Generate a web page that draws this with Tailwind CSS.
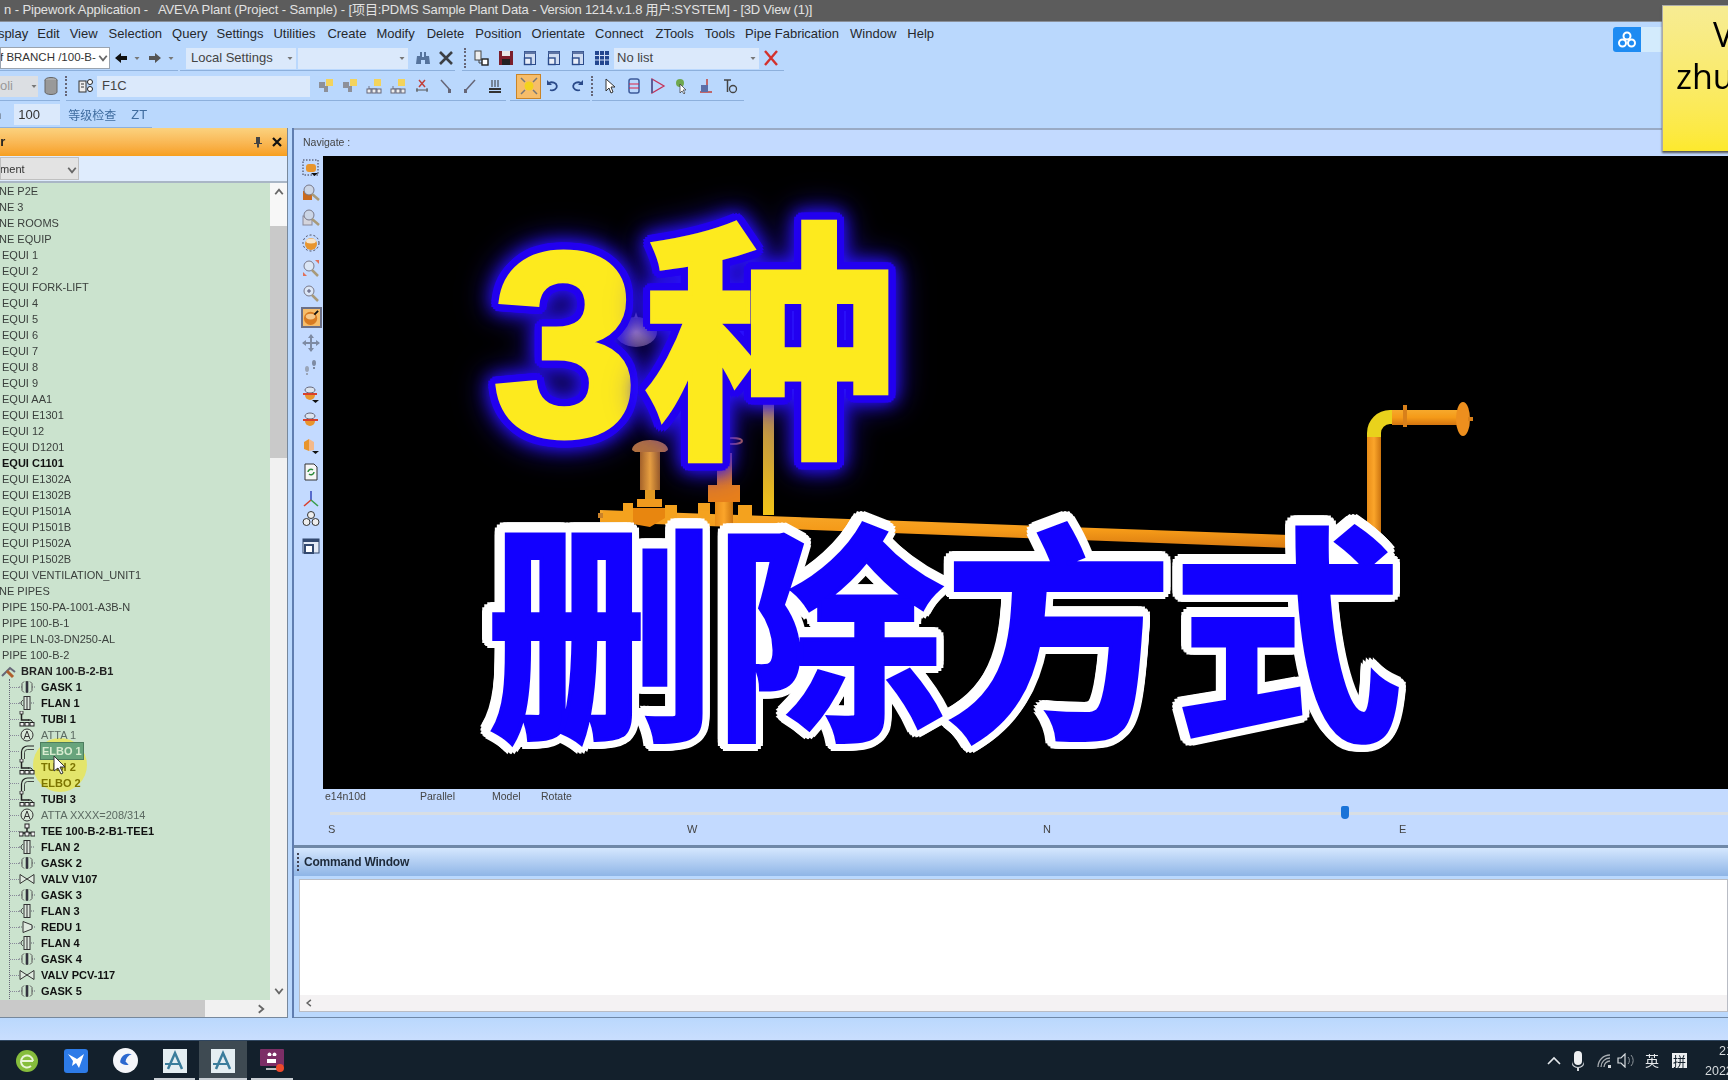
<!DOCTYPE html>
<html lang="zh">
<head>
<meta charset="UTF-8" />
<title>AVEVA Plant - 3D View</title>
<script src="https://cdn.jsdelivr.net/npm/@tailwindcss/browser@4"></script>
</head>
<body class="bg-[#bad8fd] overflow-hidden">
<!-- shared icon shapes -->
<svg class="hidden">
  <symbol id="i-gask" viewBox="0 0 16 16"><path d="M0 8h3M13 8h3" stroke="#667" fill="none" stroke-dasharray="1 1"/><path d="M5 2.500 3 4.500v7l2 2M11 2.500l2 2v7l-2 2" stroke="#555" fill="none"/><rect x="7" y="2.500" width="2" height="11" fill="#334" stroke="#333" stroke-width=".6"/></symbol>
  <symbol id="i-flan" viewBox="0 0 16 16"><path d="M0 8h4M12 8h4" stroke="#667" fill="none" stroke-dasharray="1 1"/><path d="M4 5 2 7v2l2 2" stroke="#555" fill="none"/><rect x="5" y="1.500" width="6" height="13" fill="#dfe8df" stroke="#333"/><path d="M8 1.500v13" stroke="#333"/></symbol>
  <symbol id="i-tubi" viewBox="0 0 16 16"><path d="M2.500 1v8h8" stroke="#222" fill="none" stroke-width="1.500"/><rect x="1" y="0" width="3" height="3" fill="#eee" stroke="#222" stroke-width=".8"/><rect x="1" y="11.500" width="4" height="3.500" fill="#eee" stroke="#222"/><rect x="6" y="11.500" width="4" height="3.500" fill="#eee" stroke="#222"/><rect x="11" y="11.500" width="4" height="3.500" fill="#eee" stroke="#222"/><path d="M9 9h3l2 2.500" stroke="#222" fill="none"/></symbol>
  <symbol id="i-atta" viewBox="0 0 16 16"><circle cx="8" cy="8" r="6" fill="#d8e8d8" stroke="#333"/><path d="M5 12 8 4l3 8M6 9.500h4" stroke="#333" fill="none"/></symbol>
  <symbol id="i-elbo" viewBox="0 0 16 16"><path d="M2.500 16V9a6 6 0 0 1 6-6H15" fill="none" stroke="#222" stroke-width="1.200"/><path d="M5.500 16V9.500a3 3 0 0 1 3-3H15" fill="none" stroke="#222" stroke-width=".8"/></symbol>
  <symbol id="i-tee" viewBox="0 0 16 16"><path d="M1 10h14M8 3v7" stroke="#222" stroke-width="1.500"/><rect x="6" y="1" width="4" height="4" fill="#eee" stroke="#222"/><rect x="0" y="9" width="4" height="4" fill="#eee" stroke="#222"/><rect x="6" y="9" width="4" height="4" fill="#eee" stroke="#222"/><rect x="12" y="9" width="4" height="4" fill="#eee" stroke="#222"/></symbol>
  <symbol id="i-valv" viewBox="0 0 16 16"><path d="M1 3.500v9l14-9v9z" fill="#dfeadf" stroke="#333"/></symbol>
  <symbol id="i-redu" viewBox="0 0 16 16"><path d="M0 8h3M13 8h3" stroke="#667" stroke-dasharray="1 1"/><path d="M4 2.500v11l9-3.500V6z" fill="#dfeadf" stroke="#333"/></symbol>
  <symbol id="i-chev" viewBox="0 0 8 8"><path d="M1.500 2.500 4 5.500l2.500-3" fill="none" stroke="#666" stroke-width="1.200"/></symbol>
  <symbol id="i-caret" viewBox="0 0 8 8"><path d="M1.500 3h5L4 6z" fill="#777"/></symbol>
  <symbol id="i-win" viewBox="0 0 16 16"><rect x="2.500" y="1.500" width="11" height="13" fill="#cfdcf2" stroke="#2a4a8a"/><rect x="2.500" y="1.500" width="11" height="2.500" fill="#5d74a4"/><rect x="2.500" y="8" width="6.500" height="6.500" fill="#e9eef8" stroke="#2a4a8a" stroke-width="1.400"/></symbol>
  <symbol id="i-app" viewBox="0 0 24 24"><rect width="24" height="24" fill="#e4eef2"/><path d="M5 20 12 4l7 16" fill="none" stroke="#3b7d9c" stroke-width="2.500"/><path d="M2 15h16" stroke="#3b7d9c" stroke-width="2"/></symbol>
  <symbol id="i-pick" viewBox="0 0 16 16"><path d="M1 4h6v4h3v6H6v-4H1z" fill="#8d9099"/><rect x="8" y="1" width="7" height="7" fill="#f3d35c"/></symbol>
  <symbol id="i-pick2" viewBox="0 0 16 16"><rect x="8" y="1" width="7" height="7" fill="#f3d35c"/><path d="M3 8v3h8" stroke="#778" fill="none"/><rect x="1" y="11" width="4" height="4" fill="#eee" stroke="#667"/><rect x="6" y="11" width="4" height="4" fill="#eee" stroke="#667"/><rect x="11" y="11" width="4" height="4" fill="#eee" stroke="#667"/></symbol>
</svg>

<div class="relative w-[1728px] h-[1080px] overflow-hidden flex flex-col font-['Liberation_Sans',sans-serif]">

  <div class="blur-[0.5px] flex flex-col shrink-0">
    <!-- title bar -->
    <div class="h-[22px] bg-[#5c5c5c] text-[#e2e2e2] text-[13px] leading-[20px] whitespace-nowrap overflow-hidden tracking-[-0.1px] pl-[4px] font-['Liberation_Sans','Noto_Sans_CJK_SC',sans-serif] border-b border-[#8a8f98]">n - Pipework Application -&nbsp;&nbsp; AVEVA Plant (Project - Sample) - [项目:PDMS Sample Plant Data - <span class="tracking-[-0.25px]">Version 1214.v.1.8 用户:SYSTEM] - [3D View (1)]</span></div>

    <!-- menu bar -->
    <div class="h-[23px] bg-[#bad8fd] flex items-center text-[13px] text-[#26282c] whitespace-nowrap -ml-[5px]">
      <span class="ml-0">isplay</span><span class="ml-[9px]">Edit</span><span class="ml-[10px]">View</span><span class="ml-[11px]">Selection</span><span class="ml-[10px]">Query</span><span class="ml-[9px]">Settings</span><span class="ml-[10px]">Utilities</span><span class="ml-[12px]">Create</span><span class="ml-[10px]">Modify</span><span class="ml-[12px]">Delete</span><span class="ml-[11px]">Position</span><span class="ml-[10px]">Orientate</span><span class="ml-[10px]">Connect</span><span class="ml-[12px]">ZTools</span><span class="ml-[11px]">Tools</span><span class="ml-[10px]">Pipe Fabrication</span><span class="ml-[11px]">Window</span><span class="ml-[11px]">Help</span>
    </div>

    <!-- toolbar 1 -->
    <div class="h-[26px] bg-[#bad8fd] flex items-center text-[12px] text-[#333] whitespace-nowrap relative">
      <div class="w-[110px] h-[22px] bg-white border border-[#9aa4b0] flex items-center justify-between overflow-hidden shrink-0"><span class="-ml-[1px] text-[11.500px]">f BRANCH /100-B-</span><svg class="w-3 h-3 shrink-0"><use href="#i-chev"/></svg></div>
      <svg class="w-4 h-4 ml-[3px]" viewBox="0 0 16 16"><path d="M2 8l6-5v3h6v4H8v3z" fill="#111"/></svg>
      <svg class="w-2 h-2 ml-[4px]"><use href="#i-caret"/></svg>
      <svg class="w-4 h-4 ml-[6px]" viewBox="0 0 16 16"><path d="M14 8 8 3v3H2v4h6v3z" fill="#555"/></svg>
      <svg class="w-2 h-2 ml-[4px]"><use href="#i-caret"/></svg>
      <div class="w-[110px] h-[21px] ml-[11px] bg-[#dbe9fb] flex items-center justify-between pl-[5px] pr-[2px] text-[13px] text-[#444] shrink-0">Local Settings<svg class="w-2 h-2"><use href="#i-caret"/></svg></div>
      <div class="w-[110px] h-[21px] ml-[2px] bg-[#dbe9fb] flex items-center justify-end pr-[2px] shrink-0"><svg class="w-2 h-2"><use href="#i-caret"/></svg></div>
      <svg class="w-4 h-4 ml-[7px]" viewBox="0 0 16 16"><path d="M2 6h4v8H1zM10 6h4l1 8h-5zM5 2h2v5H5zM9 2h2v5H9zM6 7h4v3H6z" fill="#55739c"/></svg>
      <svg class="w-4 h-4 ml-[7px]" viewBox="0 0 16 16"><path d="m2 2 12 12M14 2 2 14" stroke="#3c3f44" stroke-width="2.600"/></svg>
      <div class="w-[2px] h-5 ml-[10px] border-l-2 border-dotted border-[#667]"></div>
      <svg class="w-4 h-4 ml-[7px]" viewBox="0 0 16 16"><rect x="2" y="1" width="6" height="9" fill="#eee" stroke="#444"/><path d="M6 10v3h3" stroke="#444" fill="none"/><rect x="9" y="9" width="6" height="6" fill="#fff" stroke="#222" stroke-width="1.400"/></svg>
      <svg class="w-4 h-4 ml-[9px]" viewBox="0 0 16 16"><rect x="1" y="1" width="14" height="14" fill="#7c1f2c"/><rect x="4" y="1" width="8" height="5" fill="#e8e8e8"/><rect x="4" y="9" width="8" height="6" fill="#222"/></svg>
      <svg class="w-4 h-4 ml-[8px]"><use href="#i-win"/></svg>
      <svg class="w-4 h-4 ml-[8px]"><use href="#i-win"/></svg>
      <svg class="w-4 h-4 ml-[8px]"><use href="#i-win"/></svg>
      <svg class="w-4 h-4 ml-[8px]" viewBox="0 0 16 16"><rect x="1" y="1" width="14" height="14" fill="#23468f"/><path d="M1 5.500h14M1 10h14M5.500 1v14M10.500 1v14" stroke="#cfdcf5"/></svg>
      <div class="w-[145px] h-[21px] ml-[4px] bg-[#dbe9fb] flex items-center justify-between pl-[3px] pr-[2px] text-[13px] text-[#444] shrink-0">No list<svg class="w-2 h-2"><use href="#i-caret"/></svg></div>
      <svg class="w-4 h-4 ml-[4px]" viewBox="0 0 16 16"><path d="m2 1 12 14M14 1 2 15" stroke="#d3312c" stroke-width="2.400"/></svg>
      <div class="absolute left-0 bottom-0 w-[178px] h-px bg-[#8db0dc]"></div>
      <div class="absolute left-[180px] bottom-0 w-[275px] h-px bg-[#8db0dc]"></div>
      <div class="absolute left-[462px] bottom-0 w-[322px] h-px bg-[#8db0dc]"></div>
    </div>

    <!-- toolbar 2 -->
    <div class="h-[30px] bg-[#bad8fd] flex items-center text-[13px] text-[#333] whitespace-nowrap relative">
      <div class="w-[38px] h-[21px] bg-[#dcdfe3] flex items-center justify-between text-[#999] shrink-0"><span>oli</span><svg class="w-2 h-2"><use href="#i-caret"/></svg></div>
      <svg class="w-4 h-5 ml-[5px]" viewBox="0 0 16 20"><ellipse cx="8" cy="4" rx="6" ry="2.500" fill="#aaa" stroke="#666"/><path d="M2 4v12a6 2.500 0 0 0 12 0V4" fill="#999" stroke="#666"/></svg>
      <div class="w-[2px] h-5 ml-[6px] border-l-2 border-dotted border-[#667]"></div>
      <svg class="w-4 h-4 ml-[11px]" viewBox="0 0 16 16"><rect x="1" y="3" width="7" height="11" fill="#eee" stroke="#333"/><path d="M3 6h3M3 9h3" stroke="#333"/><circle cx="12" cy="4" r="2.500" fill="#fff" stroke="#222"/><circle cx="12" cy="11" r="2.500" fill="#fff" stroke="#222"/></svg>
      <div class="w-[213px] h-[21px] ml-[3px] bg-[#dbe9fb] flex items-center pl-[5px] text-[#444] shrink-0">F1C</div>
      <svg class="w-4 h-4 ml-[8px]"><use href="#i-pick"/></svg>
      <svg class="w-4 h-4 ml-[8px]"><use href="#i-pick"/></svg>
      <svg class="w-4 h-4 ml-[8px]"><use href="#i-pick2"/></svg>
      <svg class="w-4 h-4 ml-[8px]"><use href="#i-pick2"/></svg>
      <svg class="w-4 h-4 ml-[8px]" viewBox="0 0 16 16"><path d="m5 2 6 7M11 2 5 9" stroke="#c2403a" stroke-width="1.500"/><path d="M2 12h12M3 10v4M13 10v4" stroke="#555"/></svg>
      <svg class="w-4 h-4 ml-[8px]" viewBox="0 0 16 16"><path d="m3 2 9 10" stroke="#667" stroke-width="1.500"/><rect x="10" y="11" width="3" height="4" fill="#667"/></svg>
      <svg class="w-4 h-4 ml-[8px]" viewBox="0 0 16 16"><path d="M13 2 4 12" stroke="#667" stroke-width="1.500"/><rect x="2" y="11" width="3" height="4" fill="#667"/></svg>
      <svg class="w-4 h-4 ml-[9px]" viewBox="0 0 16 16"><path d="M2 11h12M2 14h12" stroke="#333" stroke-width="2"/><path d="M5 2v7M8 2v7M11 2v7" stroke="#333"/></svg>
      <div class="w-[25px] h-[25px] ml-[13px] bg-[#f6bd6a] border border-[#c98428] flex items-center justify-center shrink-0"><svg class="w-5 h-5" viewBox="0 0 20 20"><circle cx="10" cy="10" r="4.500" fill="#f3d21e"/><path d="m2 2 4 4M18 2l-4 4M2 18l4-4M18 18l-4-4" stroke="#777" stroke-width="1.500"/></svg></div>
      <svg class="w-4 h-4 ml-[4px]" viewBox="0 0 16 16"><path d="M4 5a5 4 0 1 1 1 7" fill="none" stroke="#2a4a8a" stroke-width="1.800"/><path d="M2 2v5h5z" fill="#2a4a8a"/></svg>
      <svg class="w-4 h-4 ml-[8px]" viewBox="0 0 16 16"><path d="M12 5a5 4 0 1 0-1 7" fill="none" stroke="#2a4a8a" stroke-width="1.800"/><path d="M14 2v5H9z" fill="#2a4a8a"/></svg>
      <div class="w-[2px] h-5 ml-[6px] border-l-2 border-dotted border-[#667]"></div>
      <svg class="w-4 h-4 ml-[9px]" viewBox="0 0 16 16"><path d="M4 1v12l3-3 2 5 2-1-2-5h4z" fill="#fff" stroke="#333"/></svg>
      <svg class="w-4 h-4 ml-[8px]" viewBox="0 0 16 16"><rect x="3" y="1" width="10" height="14" rx="2" fill="none" stroke="#3c5a9a" stroke-width="1.500"/><path d="M3 6h10M3 10h10" stroke="#d24"/></svg>
      <svg class="w-4 h-4 ml-[8px]" viewBox="0 0 16 16"><path d="M2 1v14l12-7z" fill="none" stroke="#c6355b" stroke-width="1.300"/><path d="M2 1v14" stroke="#3c5a9a" stroke-width="1.500"/></svg>
      <svg class="w-4 h-4 ml-[8px]" viewBox="0 0 16 16"><circle cx="6" cy="5" r="4" fill="#6fa84f"/><path d="M6 6v9l2-2 2 3 1-1-2-3h3z" fill="#fff" stroke="#333" stroke-width=".7"/></svg>
      <svg class="w-4 h-4 ml-[8px]" viewBox="0 0 16 16"><path d="M9 1v13M2 14h12" stroke="#c2403a" stroke-width="1.500"/><rect x="3" y="7" width="7" height="7" fill="#5b6fa8"/></svg>
      <svg class="w-4 h-4 ml-[8px]" viewBox="0 0 16 16"><path d="M2 2h7M5.500 2v12" stroke="#444" stroke-width="1.500"/><circle cx="11" cy="11" r="3.500" fill="none" stroke="#444" stroke-width="1.300"/></svg>
      <div class="absolute left-0 bottom-0 w-[60px] h-px bg-[#8db0dc]"></div>
      <div class="absolute left-[66px] bottom-0 w-[440px] h-px bg-[#8db0dc]"></div>
      <div class="absolute left-[510px] bottom-0 w-[80px] h-px bg-[#8db0dc]"></div>
      <div class="absolute left-[592px] bottom-0 w-[152px] h-px bg-[#8db0dc]"></div>
    </div>

    <!-- toolbar 3 -->
    <div class="h-[27px] bg-[#bad8fd] flex items-center text-[13px] text-[#333] whitespace-nowrap relative">
      <span class="-ml-[6px]">n</span>
      <div class="w-[46px] h-[21px] ml-[13px] bg-[#dbe9fb] flex items-center pl-[4px] shrink-0">100</div>
      <span class="ml-[8px] text-[#3f6c9f] text-[12px] font-['Noto_Sans_CJK_SC',sans-serif]">等级检查</span>
      <span class="ml-[15px] text-[#3f6c9f]">ZT</span>
      <div class="absolute left-0 bottom-0 w-[152px] h-px bg-[#8db0dc]"></div>
    </div>
  </div>

  <!-- main area -->
  <div class="h-[890px] flex shrink-0">
    <!-- explorer panel -->
    <div class="w-[288px] shrink-0 flex flex-col border-r border-[#77889c] blur-[0.5px]">
      <div class="h-[28px] bg-gradient-to-b from-[#fbd27e] to-[#f79f1c] flex items-center justify-between text-[13px] font-bold text-[#222] shrink-0">
        <span class="-ml-[7px]">er</span>
        <div class="flex items-center gap-[8px] pr-[4px]">
          <svg class="w-[10px] h-3" viewBox="0 0 10 12"><path d="M3 1h4v6h2v1H6v3.500H4V8H1V7h2z" fill="#444"/></svg>
          <svg class="w-3 h-3" viewBox="0 0 12 12"><path d="m2 2 8 8M10 2l-8 8" stroke="#111" stroke-width="2.200"/></svg>
        </div>
      </div>
      <div class="h-[27px] bg-[#dfecfd] flex items-center border-b-2 border-[#a9b6c6] shrink-0">
        <div class="w-[79px] h-[23px] bg-[#e3e3e3] border border-[#c0c0c0] flex items-center justify-between text-[11px] text-[#333] overflow-hidden pt-[2px]"><span class="-ml-[7px]">ement</span><svg class="w-3 h-3"><use href="#i-chev"/></svg></div>
      </div>
      <div class="flex-1 flex min-h-0">
        <div id="tree" class="relative w-[270px] h-[817px] bg-[#cbe3ce] overflow-hidden text-[11px] leading-4 text-[#3a3f3c] whitespace-nowrap shrink-0"></div>
        <!-- vertical scrollbar -->
        <div class="w-[17px] h-[817px] bg-[#f1f1f1] flex flex-col items-center shrink-0">
          <div class="h-[43px] w-full flex justify-center pt-[3px] bg-[#f7f7f7]"><svg class="w-3 h-3 rotate-180"><use href="#i-chev"/></svg></div>
          <div class="h-[232px] w-full bg-[#c9c9c9]"></div>
          <div class="flex-1"></div>
          <svg class="w-3 h-3 mb-[3px]"><use href="#i-chev"/></svg>
        </div>
      </div>
      <!-- horizontal scrollbar -->
      <div class="h-[18px] bg-[#f1f1f1] flex items-center shrink-0 border-b border-[#77889c]">
        <div class="w-[205px] h-full bg-[#c9c9c9]"></div>
        <svg class="w-3 h-3 ml-[50px] -rotate-90"><use href="#i-chev"/></svg>
      </div>
    </div>

    <!-- splitter -->
    <div class="w-[6px] bg-[#bad8fd] border-r-2 border-[#5f7db0] shrink-0"></div>

    <!-- right column -->
    <div class="flex-1 flex flex-col min-w-0">
      <div class="h-[717px] flex flex-col shrink-0 bg-[#c3daff] border-t-2 border-[#99aac4]">
        <div class="h-[26px] flex items-center pl-[9px] text-[10.500px] text-[#444] blur-[0.5px] shrink-0">Navigate :</div>
        <div class="h-[633px] flex shrink-0">
          <!-- view toolbar -->
          <div class="w-[29px] flex flex-col items-center pl-[5px] pt-[2px] blur-[0.5px] shrink-0">
            <svg class="w-[18px] h-[18px] mt-[1px]" viewBox="0 0 18 18"><rect x="1" y="1" width="15" height="15" fill="none" stroke="#334" stroke-dasharray="1.500 1.500"/><rect x="4" y="5" width="10" height="8" rx="3" fill="#e8952d"/><path d="M9 14h7l-3.500 3z" fill="#111"/></svg>
            <svg class="w-[18px] h-[18px] mt-[7px]" viewBox="0 0 18 18"><rect x="1" y="7" width="9" height="9" fill="#c96a1e"/><circle cx="7" cy="6" r="5" fill="#cbd5e6" stroke="#778"/><path d="m10 10 7 6" stroke="#a89a7a" stroke-width="2.500"/></svg>
            <svg class="w-[18px] h-[18px] mt-[7px]" viewBox="0 0 18 18"><rect x="1" y="7" width="9" height="9" fill="#d4d4dc" stroke="#889"/><circle cx="7" cy="6" r="5" fill="#cbd5e6" stroke="#778"/><path d="m10 10 7 6" stroke="#a89a7a" stroke-width="2.500"/></svg>
            <svg class="w-[18px] h-[18px] mt-[7px]" viewBox="0 0 18 18"><circle cx="9" cy="9" r="8" fill="none" stroke="#445" stroke-dasharray="2 2"/><circle cx="9" cy="10" r="6" fill="#e8952d"/><ellipse cx="9" cy="7" rx="5" ry="2.500" fill="#f6e4c8"/></svg>
            <svg class="w-[18px] h-[18px] mt-[7px]" viewBox="0 0 18 18"><circle cx="7" cy="7" r="5" fill="#dbe6f6" stroke="#778"/><path d="m10 11 6 6" stroke="#a89a7a" stroke-width="2.500"/><path d="M13 1h4v4zM1 13v4h4z" fill="#e0705a"/></svg>
            <svg class="w-[18px] h-[18px] mt-[7px]" viewBox="0 0 18 18"><circle cx="7" cy="7" r="5" fill="#dbe6f6" stroke="#778"/><path d="m10 11 6 6" stroke="#a89a7a" stroke-width="2.500"/><path d="M5 7h4M7 5v4" stroke="#557"/></svg>
            <div class="w-[21px] h-[21px] mt-[5px] bg-[#f6bd6a] border-2 border-[#6b6f86] flex items-center justify-center"><svg class="w-[17px] h-[17px]" viewBox="0 0 18 18"><circle cx="8" cy="10" r="7" fill="#d87b22"/><ellipse cx="8" cy="8" rx="5" ry="3" fill="#f4c78a"/><path d="m12 6 4-4" stroke="#111" stroke-width="2"/></svg></div>
            <svg class="w-[18px] h-[18px] mt-[6px]" viewBox="0 0 18 18"><path d="M9 1v16M1 9h16" stroke="#7e8ba3" stroke-width="2"/><path d="M9 0 6 4h6zM9 18l-3-4h6zM0 9l4-3v6zM18 9l-4-3v6z" fill="#7e8ba3"/></svg>
            <svg class="w-[18px] h-[18px] mt-[7px]" viewBox="0 0 18 18"><ellipse cx="12" cy="4" rx="2" ry="3" fill="#7e8ba3"/><rect x="11" y="8" width="2" height="2" fill="#7e8ba3"/><ellipse cx="5" cy="10" rx="2" ry="3" fill="#9aa5b8"/><rect x="4" y="14" width="2" height="2" fill="#9aa5b8"/></svg>
            <svg class="w-[18px] h-[18px] mt-[8px]" viewBox="0 0 18 18"><ellipse cx="8" cy="5" rx="5" ry="3" fill="#dce4ef" stroke="#667"/><path d="M1 9h14" stroke="#d8402c" stroke-width="2"/><path d="M3 10a5 5 0 0 0 10 0z" fill="#e8952d"/><path d="M10 15h7l-3.500 3z" fill="#111"/></svg>
            <svg class="w-[18px] h-[18px] mt-[8px]" viewBox="0 0 18 18"><ellipse cx="8" cy="5" rx="5" ry="3" fill="#dce4ef" stroke="#667"/><path d="M1 9h15" stroke="#d8402c" stroke-width="2"/><path d="M3 10a5 5 0 0 0 10 0z" fill="#e8952d"/></svg>
            <svg class="w-[18px] h-[18px] mt-[8px]" viewBox="0 0 18 18"><path d="M2 5l5-3v12l-5-2z" fill="#e8952d"/><path d="M7 2l5 3v8l-5 1z" fill="#f4b98a"/><path d="M10 14h7l-3.500 3z" fill="#111"/></svg>
            <svg class="w-[18px] h-[18px] mt-[8px]" viewBox="0 0 18 18"><path d="M3 1h9l3 3v13H3z" fill="#f6f6f6" stroke="#333"/><path d="M6 9a3 3 0 0 1 5-2M12 9a3 3 0 0 1-5 2" fill="none" stroke="#2e8b3c" stroke-width="1.500"/></svg>
            <svg class="w-[18px] h-[18px] mt-[9px]" viewBox="0 0 18 18"><path d="M9 10V1" stroke="#3b4fc0" stroke-width="1.600"/><path d="M9 10 2 16" stroke="#d8402c" stroke-width="1.600"/><path d="m9 10 7 6" stroke="#3a9d4a" stroke-width="1.600"/></svg>
            <svg class="w-[18px] h-[18px] mt-[2px]" viewBox="0 0 18 18"><circle cx="9" cy="5" r="3.500" fill="#eee" stroke="#333"/><circle cx="4.500" cy="12" r="3.500" fill="#eee" stroke="#333"/><circle cx="13.500" cy="12" r="3.500" fill="#eee" stroke="#333"/></svg>
            <svg class="w-[18px] h-[18px] mt-[9px]" viewBox="0 0 18 18"><rect x="1" y="2" width="16" height="14" fill="#e4ebf6" stroke="#33496f"/><rect x="1" y="2" width="16" height="3" fill="#33496f"/><rect x="3" y="8" width="8" height="8" fill="#fff" stroke="#33496f" stroke-width="2"/></svg>
          </div>
          <!-- 3D viewport -->
          <div class="flex-1 bg-black relative overflow-hidden">
            <svg class="absolute inset-0 w-full h-full" viewBox="323 156 1405 633" fill="none">
              <defs>
                <linearGradient id="pipeH" x1="0" y1="0" x2="0" y2="1"><stop offset="0" stop-color="#f7a92c"/><stop offset=".5" stop-color="#f59a18"/><stop offset="1" stop-color="#d47510"/></linearGradient>
                <linearGradient id="pipeV" x1="0" y1="0" x2="1" y2="0"><stop offset="0" stop-color="#e98d18"/><stop offset=".5" stop-color="#fba52a"/><stop offset="1" stop-color="#cc7410"/></linearGradient>
                <linearGradient id="stem" x1="0" y1="0" x2="1" y2="0"><stop offset="0" stop-color="#a4622a"/><stop offset=".5" stop-color="#e8a040"/><stop offset="1" stop-color="#9a5c26"/></linearGradient>
                <linearGradient id="stem2" x1="0" y1="0" x2="0" y2="1"><stop offset="0" stop-color="#b5683a"/><stop offset="1" stop-color="#e8801a"/></linearGradient>
                <linearGradient id="thin" x1="0" y1="0" x2="0" y2="1"><stop offset="0" stop-color="#b68a4a"/><stop offset="1" stop-color="#f2c418"/></linearGradient>
                <radialGradient id="blob"><stop offset="0" stop-color="#c7a79a"/><stop offset="1" stop-color="#6e5a5a"/></radialGradient>
              </defs>
              <!-- thin upright -->
              <rect x="763" y="390" width="11" height="125" fill="url(#thin)"/>
              <!-- main run -->
              <path d="M600 510 1372 538 1372 551 600 522z" fill="url(#pipeH)"/>
              <rect x="598" y="513" width="6" height="5" fill="#c9822a"/>
              <!-- right riser, elbow, and end flange -->
              <rect x="1367" y="435" width="14" height="112" fill="url(#pipeV)"/>
              <path d="M1374 437v-4a16 16 0 0 1 16-16h4" stroke="#e9d21c" stroke-width="14"/>
              <rect x="1392" y="410" width="66" height="15" fill="url(#pipeH)"/>
              <rect x="1403" y="405" width="4" height="22" fill="#d8801a"/>
              <ellipse cx="1463" cy="419" rx="7" ry="17" fill="#ed8f1e"/>
              <rect x="1468" y="417" width="5" height="4" fill="#d8801a"/>
              <!-- valve one -->
              <path d="M632 450a18 10 0 0 1 36 0l-3 2h-30z" fill="#b5743a"/>
              <rect x="640" y="452" width="20" height="38" fill="url(#stem)"/>
              <rect x="645" y="490" width="10" height="10" fill="#e29a22"/>
              <rect x="637" y="499" width="25" height="8" fill="#f09a1e"/>
              <path d="M603 511h20v11h-20zM623 503h10v22h-10zM665 505h12v20h-12z" fill="#f4a21e"/>
              <path d="M633 508h32v10l-15 9-17-3z" fill="#e8860f"/>
              <!-- valve two -->
              <ellipse cx="732" cy="441" rx="10" ry="3" stroke="#b5693a" stroke-width="2"/>
              <rect x="722" y="441" width="6" height="14" fill="#b5693a"/>
              <rect x="717" y="453" width="15" height="33" fill="url(#stem2)"/>
              <rect x="708" y="485" width="32" height="17" fill="#e8801a"/>
              <rect x="715" y="502" width="18" height="24" fill="url(#pipeV)"/>
              <path d="M698 503h12v25h-12zM738 505h14v18h-14z" fill="#f4a21e"/>
              <!-- upper fitting behind the lettering -->
              <ellipse cx="636" cy="332" rx="21" ry="15" fill="url(#blob)"/>
              <path d="M634 318l2-6 2 6z" fill="#8c7468"/>
            </svg>
            <!-- headline lettering over the picture -->
            <div class="absolute left-[169px] top-[58px] text-[#fdea1e] font-bold font-['Liberation_Sans',sans-serif] text-[262px] leading-none whitespace-nowrap [-webkit-text-stroke:5px_#fdea1e] [filter:drop-shadow(3px_0_0_#2200f0)_drop-shadow(-3px_0_0_#2200f0)_drop-shadow(0_3px_0_#2200f0)_drop-shadow(0_-3px_0_#2200f0)_drop-shadow(2px_2px_0_#2200f0)_drop-shadow(-2px_-2px_0_#2200f0)_drop-shadow(2px_-2px_0_#2200f0)_drop-shadow(-2px_2px_0_#2200f0)_drop-shadow(0_0_8px_#2a10ff)_drop-shadow(0_0_14px_#2a10ffaa)]">3</div>
            <div class="absolute left-[321px] top-[44px] text-[#fdea1e] font-bold font-['Noto_Sans_CJK_SC',sans-serif] text-[254px] leading-none whitespace-nowrap [-webkit-text-stroke:5px_#fdea1e] [filter:drop-shadow(3px_0_0_#2200f0)_drop-shadow(-3px_0_0_#2200f0)_drop-shadow(0_3px_0_#2200f0)_drop-shadow(0_-3px_0_#2200f0)_drop-shadow(2px_2px_0_#2200f0)_drop-shadow(-2px_-2px_0_#2200f0)_drop-shadow(2px_-2px_0_#2200f0)_drop-shadow(-2px_2px_0_#2200f0)_drop-shadow(0_0_8px_#2a10ff)_drop-shadow(0_0_14px_#2a10ffaa)]">种</div>
            <div class="absolute left-[163px] top-[352px] text-[#1200ff] font-bold font-['Noto_Sans_CJK_SC',sans-serif] text-[229px] leading-none whitespace-nowrap [-webkit-text-stroke:4px_#1200ff] [filter:drop-shadow(3.500px_0_0.5px_#fff)_drop-shadow(-3.500px_0_0.5px_#fff)_drop-shadow(0_3.500px_0.5px_#fff)_drop-shadow(0_-3.500px_0.5px_#fff)_drop-shadow(2.500px_2.500px_0.5px_#fff)_drop-shadow(-2.500px_-2.500px_0.5px_#fff)_drop-shadow(2.500px_-2.500px_0.5px_#fff)_drop-shadow(-2.500px_2.500px_0.5px_#fff)]">删除方式</div>
          </div>
        </div>
        <!-- view status area -->
        <div class="flex-1 relative text-[10.500px] text-[#444] blur-[0.5px]">
          <div class="flex items-center h-[14px] mt-[1px] pl-[31px]">
            <span class="w-[95px]">e14n10d</span><span class="w-[72px]">Parallel</span><span class="w-[49px]">Model</span><span>Rotate</span>
          </div>
          <div class="h-[3px] bg-[#d8dee4] ml-[36px] mt-[8px]"></div>
          <div class="absolute left-[1047px] top-[17px] w-[8px] h-[13px] bg-[#1a73d8] rounded-b-[4px] rounded-t-[2px]"></div>
          <div class="flex mt-[6px] pl-[34px] text-[11px]">
            <span class="w-[359px]">S</span><span class="w-[356px]">W</span><span class="w-[356px]">N</span><span>E</span>
          </div>
        </div>
      </div>

      <!-- command window -->
      <div class="flex-1 flex flex-col border-t-[3px] border-[#6f88a8] blur-[0.5px] min-h-0">
        <div class="h-[28px] bg-gradient-to-b from-[#d5e7fe] to-[#8fb5e6] flex items-center text-[12px] font-bold text-[#1d2a3a] shrink-0">
          <div class="w-[2px] h-[18px] ml-[3px] border-l-2 border-dotted border-[#445]"></div>
          <span class="ml-[5px] tracking-[-0.2px]">Command Window</span>
        </div>
        <div class="flex-1 bg-[#bad8fd] pl-[5px] pt-[3px] pb-[5px] flex flex-col min-h-0 border-b border-[#6f88a8]">
          <div class="flex-1 bg-white border border-[#b9bcc4] flex flex-col min-h-0">
            <div class="flex-1"></div>
            <div class="h-[16px] bg-[#f4f2f3] flex items-center pl-[4px]"><svg class="w-[10px] h-[10px] rotate-90"><use href="#i-chev"/></svg></div>
          </div>
        </div>
      </div>
    </div>
  </div>

  <!-- status strip -->
  <div class="h-[22px] bg-gradient-to-b from-[#bad8fd] to-[#c9defe] shrink-0"></div>

  <!-- taskbar -->
  <div class="h-[40px] bg-[#13202c] flex items-center relative shrink-0 blur-[0.4px] border-t border-[#2f4660]">
    <div class="w-[48px] h-full flex items-center justify-center ml-[3px]"><svg class="w-[24px] h-[24px]" viewBox="0 0 24 24"><circle cx="12" cy="12" r="11" fill="#86bd3c"/><path d="M6 12h12M18 12a6 6 0 1 0-2 5" fill="none" stroke="#e9f4d8" stroke-width="2"/></svg></div>
    <div class="w-[50px] h-full flex items-center justify-center"><svg class="w-[24px] h-[24px]" viewBox="0 0 24 24"><rect width="24" height="24" rx="3" fill="#2d7be8"/><path d="M4 5l9 5 7-5-5 14-3-5-4 3 1-5z" fill="#fff"/></svg></div>
    <div class="w-[49px] h-full flex items-center justify-center"><svg class="w-[25px] h-[25px]" viewBox="0 0 24 24"><circle cx="12" cy="12" r="12" fill="#f5f6fa"/><path d="M7 14a8 8 0 0 1 11-8 9 9 0 0 0-6 7l3 3c-3 1-6 0-8-2z" fill="#2c68d0"/></svg></div>
    <div class="w-[49px] h-full flex items-center justify-center relative"><svg class="w-[24px] h-[24px]"><use href="#i-app"/></svg><div class="absolute bottom-0 left-[4px] right-[4px] h-[2px] bg-[#c8ced4]"></div></div>
    <div class="w-[48px] h-full flex items-center justify-center bg-[#3e4a52] relative"><svg class="w-[24px] h-[24px]"><use href="#i-app"/></svg><div class="absolute bottom-0 inset-x-0 h-[2px] bg-[#c8ced4]"></div></div>
    <div class="w-[50px] h-full flex items-center justify-center relative"><svg class="w-[25px] h-[25px]" viewBox="0 0 25 25"><rect y="1" width="24" height="17" rx="1" fill="#7c2e66"/><path d="M7 11h9v4H7zM8 8a2 2 0 1 1 3 0zM13 8a2 2 0 1 1 3 0z" fill="#fff"/><path d="M6 21h12" stroke="#eee" stroke-width="1.500"/><circle cx="20" cy="20" r="4" fill="#ef4a2c"/></svg><div class="absolute bottom-0 left-[4px] right-[4px] h-[2px] bg-[#c8ced4]"></div></div>
    <div class="flex-1"></div>
    <!-- tray -->
    <svg class="w-[14px] h-[14px]" viewBox="0 0 14 14"><path d="m1 10 6-6 6 6" fill="none" stroke="#e4e8ec" stroke-width="1.600"/></svg>
    <svg class="w-[14px] h-[20px] ml-[10px]" viewBox="0 0 14 20"><rect x="3" y="0" width="8" height="14" rx="4" fill="#eef0f2"/><path d="M1 10a6 6 0 0 0 12 0v3a6 4 0 0 1-12 0zM6 17h2v3H6z" fill="#cfd3d8"/></svg>
    <svg class="w-[15px] h-[14px] ml-[12px]" viewBox="0 0 15 14"><path d="M1 13a12 12 0 0 1 12-12M4 13a9 9 0 0 1 9-9M7 13a6 6 0 0 1 6-6" fill="none" stroke="#a8adb2" stroke-width="1.300"/><rect x="11" y="11" width="3" height="3" fill="#d8dce0"/></svg>
    <svg class="w-[18px] h-[15px] ml-[5px]" viewBox="0 0 18 15"><path d="M1 5h3l4-4v13l-4-4H1z" fill="none" stroke="#d8dce0" stroke-width="1.200"/><path d="M11 4a5 5 0 0 1 0 7M14 2a8 8 0 0 1 0 11" fill="none" stroke="#8d949a"/></svg>
    <span class="ml-[10px] text-[14px] text-[#e6e9ec] font-['Noto_Sans_CJK_SC',sans-serif]">英</span>
    <span class="ml-[13px] w-[15px] h-[15px] bg-[#eceef0] text-[#13202c] text-[13px] leading-[15px] text-center font-['Noto_Sans_CJK_SC',sans-serif]">拼</span>
    <div class="w-[23px] ml-[18px] -mb-[1px] text-[12.500px] text-[#d6dadd] leading-[20px] whitespace-nowrap">
      <div class="pl-[14px]">21</div>
      <div>2022</div>
    </div>
  </div>

  <!-- net-disk widget and sticky note over the toolbar -->
  <div class="absolute left-[1613px] top-[27px] w-[60px] h-[25px] bg-[#d3ebfd] rounded-[3px] overflow-hidden blur-[0.5px]">
    <div class="w-[28px] h-full bg-[#1e8bf2] flex items-center justify-center"><svg class="w-[20px] h-[18px]" viewBox="0 0 20 18"><circle cx="10" cy="5" r="3.500" fill="none" stroke="#fff" stroke-width="2"/><circle cx="5.500" cy="12" r="3.500" fill="none" stroke="#fff" stroke-width="2"/><circle cx="14.500" cy="12" r="3.500" fill="none" stroke="#fff" stroke-width="2"/></svg></div>
  </div>
  <div class="absolute left-[1662px] top-[5px] w-[80px] h-[146px] bg-gradient-to-b from-[#f7ec93] to-[#fde92c] shadow-[0_2px_2px_#555] border-l border-t border-[#aaa] text-black overflow-hidden font-['Open_Sans',sans-serif] text-[34px] leading-none blur-[0.5px]">
    <div class="pl-[50px] pt-[11px]">V</div>
    <div class="pl-[13px] pt-[8px]">zhu</div>
  </div>

  <!-- presenter cursor over the tree -->
  <svg class="absolute left-[53px] top-[755px] w-[14px] h-[20px]" viewBox="0 0 14 20"><path d="M1 1v15l4-3 3 6 2-1-3-6h5z" fill="#fff" stroke="#333"/></svg>
</div>

<script>
  // explorer rows, text plus icon for the branch children
  const plain = ['NE P2E','NE 3','NE ROOMS','NE EQUIP','EQUI 1','EQUI 2','EQUI FORK-LIFT','EQUI 4','EQUI 5','EQUI 6','EQUI 7','EQUI 8','EQUI 9','EQUI AA1','EQUI E1301','EQUI 12','EQUI D1201','EQUI C1101','EQUI E1302A','EQUI E1302B','EQUI P1501A','EQUI P1501B','EQUI P1502A','EQUI P1502B','EQUI VENTILATION_UNIT1','NE PIPES','PIPE 150-PA-1001-A3B-N','PIPE 100-B-1','PIPE LN-03-DN250-AL','PIPE 100-B-2'];
  const kids = [['gask','GASK 1'],['flan','FLAN 1'],['tubi','TUBI 1'],['atta','ATTA 1'],['elbo','ELBO 1'],['tubi','TUBI 2'],['elbo','ELBO 2'],['tubi','TUBI 3'],['atta','ATTA XXXX=208/314'],['tee','TEE 100-B-2-B1-TEE1'],['flan','FLAN 2'],['gask','GASK 2'],['valv','VALV V107'],['gask','GASK 3'],['flan','FLAN 3'],['redu','REDU 1'],['flan','FLAN 4'],['gask','GASK 4'],['valv','VALV PCV-117'],['gask','GASK 5']];

  // click highlight sits under the labels
  let html = '<div class="absolute left-[33px] top-[555px] w-[54px] h-[54px] rounded-full bg-[#e3e56b]"></div>';

  html += plain.map(t => {
    const indent = t.startsWith('NE') ? '-ml-[1px]' : 'ml-[2px]';
    const weight = t === 'EQUI C1101' ? 'font-bold text-[#111]' : '';
    return `<div class="h-4 ${indent} ${weight}">${t}</div>`;
  }).join('');

  html += `<div class="h-4 flex items-center font-bold text-[#222]"><svg class="w-4 h-4 ml-[1px] mr-[4px]" viewBox="0 0 16 16"><path d="M1 13 9 5l5 4" fill="none" stroke="#667" stroke-width="2"/><path d="m6 8 6 6" stroke="#b0602c" stroke-width="3"/></svg>BRAN 100-B-2-B1</div>`;

  html += '<div class="relative ml-[9px] border-l border-dotted border-[#667]">' + kids.map(([icon, t]) => {
    let label = 'font-bold text-[#111]';
    if (icon === 'atta') label = 'text-[#5c6a62]';
    if (t === 'ELBO 1') label = 'font-bold text-[#d8ecd0] bg-[#68a47c] outline outline-1 outline-[#4d7d5f] px-[1px] -mx-[1px]';
    if (t === 'TUBI 2' || t === 'ELBO 2') label = 'font-bold text-[#7c7400]';
    return `<div class="h-4 flex items-center"><div class="w-[9px] border-t border-dotted border-[#889]"></div><svg class="w-4 h-4 shrink-0"><use href="#i-${icon}"/></svg><span class="ml-[6px] relative z-10 ${label}">${t}</span></div>`;
  }).join('') + '</div>';

  document.getElementById('tree').innerHTML = html;
</script>
</body>
</html>
